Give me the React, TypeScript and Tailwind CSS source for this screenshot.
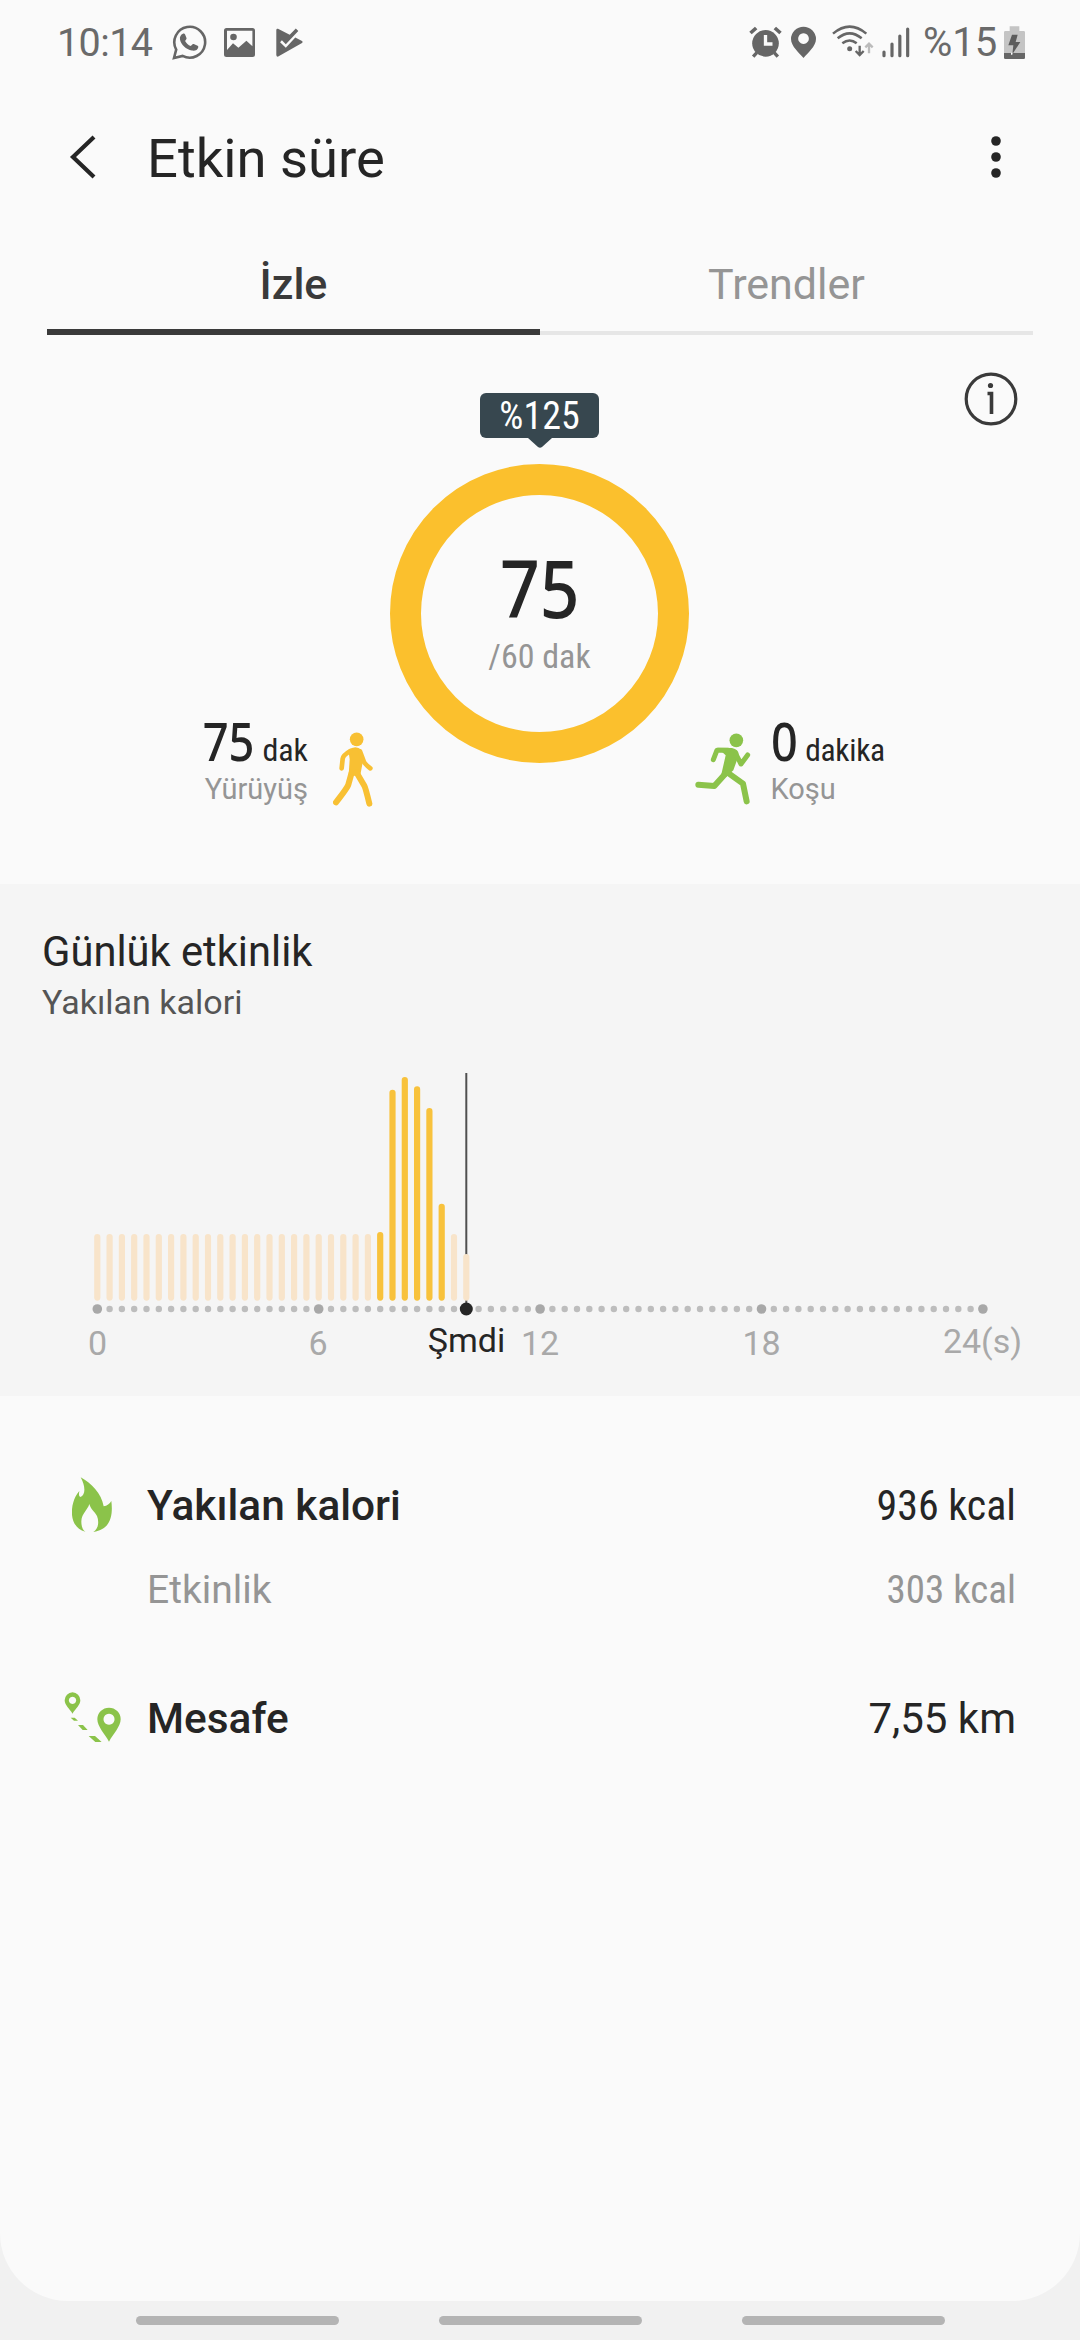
const BAR_STEP = 12.3;
const AXIS_START = 97.3;

// bars above the resting level, keyed by 20 minute slot
const ACTIVE_TOPS: Record<number, number> = { 23: 348, 24: 205.7, 25: 193, 26: 202.3, 27: 224, 28: 319.7 };

const NOW_INDEX = 30;

function WhatsappIcon() {
  return (
    <svg width="35" height="35" viewBox="0 0 35 35" fill="none">
      <path d="M2 33 L4.2 24.6 A15.4 15.4 0 1 1 10.6 30.9 Z" stroke="#666" strokeWidth="2.6" />
      <path fill="#666" d="M10.9 8.800c.9-.4 1.900-.1 2.200.7l1.400 3.400c.2.6 0 1.100-.4 1.600l-1 1.500c1.200 2.300 3.100 4 5.600 5.100l1.700-1.700c.4-.4.9-.5 1.400-.3l3.800 1.700c.6.3.8.8.7 1.400-.6 2.800-3.400 4-6.400 3.400-5.900-1.200-10.900-6-11.900-11.100-.5-2.600.9-4.900 2.900-5.700z" />
    </svg>
  );
}

function GalleryIcon() {
  return (
    <svg width="31" height="29" viewBox="0 0 31 29">
      <path fill="#666" fillRule="evenodd" d="M2.500 0h26a2.500 2.500 0 0 1 2.500 2.500v24a2.500 2.500 0 0 1-2.500 2.500h-26a2.500 2.500 0 0 1-2.500-2.500v-24a2.500 2.500 0 0 1 2.500-2.500zM3 2.700v19.300l6-6.700 5.400 4.400 8-7 6 5.500v-15.500z" />
      <circle cx="9.500" cy="9" r="3.300" fill="#666" />
    </svg>
  );
}

function PlayCheckIcon() {
  return (
    <svg width="27" height="29" viewBox="0 0 27 29">
      <path fill="#666" d="M.3 2Q.5.200 2 .8L13.700 6.800 19.800.6 22.300 2.900 9.800 16.200 5.900 12.300 4.100 14.200 9.800 19.800 19.300 9.600 26 13Q27.200 14 26 15L2.200 28.600Q.5 29 .3 27Z" />
    </svg>
  );
}

function AlarmIcon() {
  return (
    <svg width="33" height="32" viewBox="143 76 98 96">
      <circle cx="192" cy="128" r="40" fill="#666" />
      <path d="M147 97 164 82M237 97 220 82" stroke="#666" strokeWidth="11" />
      <path d="M166 156 155 168M218 156 229 168" stroke="#666" strokeWidth="10" />
      <path d="M192 103v27h21" stroke="#fafafa" strokeWidth="10" fill="none" />
    </svg>
  );
}

function PlaceIcon() {
  return (
    <svg width="25" height="32" viewBox="270 76 75 96">
      <path fill="#666" fillRule="evenodd" d="M307.500 78A37.500 37.500 0 0 1 345 115C345 137 320 157 307.500 172C295 157 270 137 270 115A37.500 37.500 0 0 1 307.500 78ZM307.500 98a16 16 0 1 0 .1 0z" />
    </svg>
  );
}

function WifiIcon() {
  return (
    <svg width="42" height="32" viewBox="392 74 126 96" fill="none">
      <g stroke="#666" strokeWidth="7.500">
        <path d="M395 100Q445 58 495 100" />
        <path d="M409 114Q445 84 481 114" />
        <path d="M423 129Q445 112 466 129" />
      </g>
      <circle cx="445" cy="145" r="7.500" fill="#666" />
      <path d="M475 136v28M463 152l12 12 12-12" stroke="#666" strokeWidth="7" />
      <path d="M503 159v-28M492 141l11-11 11 11" stroke="#bbb" strokeWidth="7" />
    </svg>
  );
}

function SignalIcon() {
  return (
    <svg width="28" height="31" viewBox="542 78 84 93">
      <path d="M548 153v11M572 129v35M595.500 105v59M619 84v80" stroke="#666" strokeWidth="9.500" strokeLinecap="round" />
    </svg>
  );
}

function BatteryIcon() {
  return (
    <svg width="21" height="33" viewBox="909 75 63 99">
      <path fill="#c4c4c4" d="M926 76h29v14h13q4 0 4 4v63h-63v-63q0-4 4-4h13z" />
      <path fill="#666" d="M909 156h63v14q0 4-4 4h-55q-4 0-4-4z" />
      <path fill="#5c5c5c" d="M933 101h17l-6 22h14l-24 37 3-27h-15z" />
      <path fill="#fff" d="M930 155h5l-1 6h-4z" />
    </svg>
  );
}

function WalkIcon() {
  return (
    <svg width="40" height="75" viewBox="460 94 120 225" fill="none" stroke="#f8c033" strokeLinecap="round" strokeLinejoin="round">
      <circle cx="531" cy="116" r="20.500" fill="#f8c033" stroke="none" />
      <path d="M506 148Q528 132 546 148L550 180 541 228 507 222 510 176Z" fill="#f8c033" stroke="none" />
      <g strokeWidth="14">
        <path d="M512 151Q490 164 489 174L486 203" />
        <path d="M541 152 552 181Q553 188 572 203" />
      </g>
      <g strokeWidth="18">
        <path d="M516 216 506 252Q503 262 469 305" />
        <path d="M531 216 554 255Q558 262 569 309" />
      </g>
    </svg>
  );
}

function RunIcon() {
  return (
    <svg width="56" height="73" viewBox="73 98 168 219" fill="none" stroke="#8bc34a" strokeLinecap="round" strokeLinejoin="round">
      <circle cx="197" cy="120" r="20.500" fill="#8bc34a" stroke="none" />
      <path d="M140 142 184 143Q208 148 203 168L188 210 166 230 152 222 165 165Z" fill="#8bc34a" stroke="none" />
      <g strokeWidth="15">
        <path d="M172 150 139 149.500 128 178" />
        <path d="M196 162 211 191 231 164" />
      </g>
      <g strokeWidth="18">
        <path d="M164 220 131 257 83 253" />
        <path d="M174 219 217 250 228 303" />
      </g>
    </svg>
  );
}

function FlameIcon() {
  return (
    <svg width="40" height="56" viewBox="96 79 120 168">
      <path fill="#8bc34a" d="M122 80C155 98 184 128 191 167 201 165 209 160 214 151 219 192 214 236 160 244 175 235 178 214 171 196 164 182 153 178 148 160 143 178 125 188 124 212 124 228 128 238 136 243 95 232 90 188 100 155 103 142 110 130 118 121 116 132 117 138 121 139 138 132 136 106 122 80Z" />
    </svg>
  );
}

function RouteIcon() {
  return (
    <svg width="57" height="51" viewBox="71 726 171 153" fill="#8bc34a">
      <path fillRule="evenodd" d="M96.500 727A24 24 0 0 1 120 751C120 765 105 777 96.500 791 88 777 73 765 73 751A24 24 0 0 1 96.500 727ZM96.500 740a11 11 0 1 0 .1 0z" />
      <path fillRule="evenodd" d="M206 773A35 35 0 0 1 241 808C241 830 218 853 206 875 194 853 171 830 171 808A35 35 0 0 1 206 773ZM206 791a16.500 16.500 0 1 0 .1 0z" />
      <path d="M91 803h12l10 9h-12zM113 825h15l14 15h-15zM145 858h19l20 18h-19z" />
    </svg>
  );
}

function StatusBar() {
  return (
    <div className="flex h-[86px] items-center justify-between pl-[57px] pr-[55px] text-[40px] text-[#6a6a6a]">
      <div className="flex items-center">
        <span className="w-[115px] text-[39.500px] tracking-[-0.6px]">10:14</span>
        <div className="flex items-center pb-0.5">
          <WhatsappIcon />
          <div className="ml-[16.500px]"><GalleryIcon /></div>
          <div className="ml-[21px]"><PlayCheckIcon /></div>
        </div>
      </div>
      <div className="flex items-center">
        <div className="flex items-center pb-0.5">
          <AlarmIcon />
          <div className="ml-[9px]"><PlaceIcon /></div>
          <div className="mb-0.5 ml-4"><WifiIcon /></div>
          <div className="ml-2"><SignalIcon /></div>
        </div>
        <span className="ml-[13px] w-[81px]">%15</span>
        <div className="pb-0.5"><BatteryIcon /></div>
      </div>
    </div>
  );
}

function Header() {
  return (
    <div className="flex h-[146px] items-center pl-[69px] text-[#252525]">
      <svg width="28" height="44" viewBox="0 0 28 44" fill="none" className="mb-1">
        <path d="M25 2 4 22 25 42" stroke="currentColor" strokeWidth="4.200" />
      </svg>
      <h1 className="ml-[50px] flex-1 text-[54.400px] leading-none">Etkin süre</h1>
      <svg width="10" height="44" viewBox="0 0 10 44" fill="currentColor" className="mb-1 mr-[79.500px]">
        <circle cx="5" cy="6" r="4.800" />
        <circle cx="5" cy="22" r="4.800" />
        <circle cx="5" cy="38" r="4.800" />
      </svg>
    </div>
  );
}

function Tabs() {
  return (
    <div className="mx-[47px] flex h-[103px] items-end text-[43px]">
      <div className="flex h-full flex-1 items-center justify-center border-b-[6px] border-[#3a3a3a] pt-2 font-medium text-[#3a3a3a]">İzle</div>
      <div className="flex h-full flex-1 items-center justify-center border-b-4 border-[#e6e6e6] pt-1.5 text-[#959595]">Trendler</div>
    </div>
  );
}

function Summary() {
  return (
    <section className="grid h-[549px] grid-cols-[390px_299px_1fr]">
      <div className="flex items-start justify-end pr-[17px] pt-[380px]">
        <div className="flex flex-col items-end">
          <div className="flex h-[58px] items-baseline leading-[52px] text-[#252525]">
            <span className="origin-right scale-x-[0.87] font-['Noto_Sans'] text-[52px] font-medium">75</span>
            <span className="ml-2 text-[32px] font-stretch-condensed">dak</span>
          </div>
          <div className="text-[29px] leading-8 text-[#959595]">Yürüyüş</div>
        </div>
        <div className="ml-[25px] mt-[17px]"><WalkIcon /></div>
      </div>

      <div className="flex flex-col items-center pt-[58px]">
        <div className="flex h-[45px] w-[119px] items-center justify-center rounded-md bg-[#37474f] text-[38px] leading-none text-white font-stretch-condensed">%125</div>
        <svg width="24" height="10" viewBox="0 0 24 10"><path d="M0 0H24L14 9Q12 10.500 10 9Z" fill="#37474f" /></svg>
        <div className="mt-4 flex h-[299px] w-[299px] flex-col items-center rounded-full border-[31.500px] border-[#fbc02d] pt-[52px]">
          <div className="scale-x-[0.87] font-['Noto_Sans'] text-[80px] font-medium leading-[80px] text-[#252525]">75</div>
          <div className="mt-[9px] text-[34px] leading-10 text-[#959595] font-stretch-condensed">/60 dak</div>
        </div>
      </div>

      <div className="flex flex-col pt-[37px]">
        <svg width="54" height="54" viewBox="0 0 54 54" fill="none" className="mr-[62px] self-end">
          <circle cx="27" cy="27" r="24.800" stroke="#3a3a3a" strokeWidth="3.200" />
          <circle cx="26.500" cy="13.500" r="2.600" fill="#3a3a3a" />
          <path d="M23.500 21.500h4v20.500" stroke="#3a3a3a" strokeWidth="3.600" />
        </svg>
        <div className="mt-[289px] flex items-start pl-[5.500px]">
          <div className="mt-[18px]"><RunIcon /></div>
          <div className="ml-5">
            <div className="flex h-[58px] items-baseline leading-[52px] text-[#252525]">
              <span className="origin-left scale-x-[0.9] font-['Noto_Sans'] text-[52px] font-medium">0</span>
              <span className="ml-[5px] text-[31.500px] tracking-[-0.3px] font-stretch-condensed">dakika</span>
            </div>
            <div className="text-[29px] leading-8 text-[#959595]">Koşu</div>
          </div>
        </div>
      </div>
    </section>
  );
}

function DailyChart() {
  const bars = Array.from({ length: NOW_INDEX + 1 }, (_, i) => i);
  const dots = Array.from({ length: 73 }, (_, i) => i);
  const nowX = AXIS_START + NOW_INDEX * BAR_STEP;

  return (
    <section className="h-[512px] bg-[#f5f5f5] pt-[42px]">
      <h2 className="pl-[42px] text-[41.700px] leading-[52px] text-[#252525]">Günlük etkinlik</h2>
      <div className="pl-[42px] text-[34px] leading-[48px] text-[#555]">Yakılan kalori</div>
      <svg width="1080" height="370" viewBox="0 142 1080 370">
        <path d={`M${nowX} 189V424`} stroke="#505050" strokeWidth="2" />
        {bars.map(i => {
          const top = ACTIVE_TOPS[i] ?? (i === NOW_INDEX ? 370 : 350);
          return (
            <rect key={i} x={AXIS_START + i * BAR_STEP - 3.1} y={top} width="6.200" height={416.7 - top} rx="3.100"
              fill={ACTIVE_TOPS[i] ? '#f8c23c' : '#f8e4ca'} />
          );
        })}
        {dots.map(i => (
          <circle key={i} cx={AXIS_START + i * BAR_STEP} cy="425" r={i % 18 === 0 ? 4.8 : 3.2} fill={i % 18 === 0 ? '#a8a8a8' : '#bdbdbd'} />
        ))}
        <circle cx={nowX} cy="425" r="6.500" fill="#252525" />
        <g fontSize="34" fill="#a9a9a9" textAnchor="middle">
          <text x="97.500" y="471">0</text>
          <text x="318" y="471">6</text>
          <text x="540" y="471">12</text>
          <text x="761.500" y="471">18</text>
          <text x="982.500" y="469">24(s)</text>
          <text x="466.500" y="468" fill="#252525">Şmdi</text>
        </g>
      </svg>
    </section>
  );
}

function Details() {
  return (
    <section className="pr-[64px] pt-[74px] text-[42px] leading-[70px] text-[#252525]">
      <div className="flex h-[70px] items-center">
        <div className="flex w-[147px] pl-[72px]"><FlameIcon /></div>
        <div className="flex-1 pt-0.5 text-[42.400px] font-medium">Yakılan kalori</div>
        <div className="pt-0.5 font-stretch-condensed">936 kcal</div>
      </div>
      <div className="mt-[15px] flex h-[70px] items-center pl-[147px] text-[39px] text-[#959595]">
        <div className="flex-1">Etkinlik</div>
        <div className="font-stretch-condensed">303 kcal</div>
      </div>
      <div className="mt-[57px] flex h-[70px] items-center">
        <div className="flex w-[147px] pl-[63.500px]"><RouteIcon /></div>
        <div className="flex-1 pt-1 text-[42.400px] font-medium">Mesafe</div>
        <div className="pt-1">7,55 km</div>
      </div>
    </section>
  );
}

export default function App() {
  return (
    <div className="flex h-[2340px] w-[1080px] flex-col overflow-hidden bg-[#f1f1f1] font-['Roboto',sans-serif]">
      <main className="h-[2301px] rounded-b-[68px] bg-[#fafafa]">
        <StatusBar />
        <Header />
        <Tabs />
        <Summary />
        <DailyChart />
        <Details />
      </main>
      <nav className="flex h-[39px] justify-center gap-[100px] pt-[15px]">
        <div className="h-[9px] w-[203px] rounded-full bg-[#b4b4b4]" />
        <div className="h-[9px] w-[203px] rounded-full bg-[#b4b4b4]" />
        <div className="h-[9px] w-[203px] rounded-full bg-[#b4b4b4]" />
      </nav>
    </div>
  );
}
